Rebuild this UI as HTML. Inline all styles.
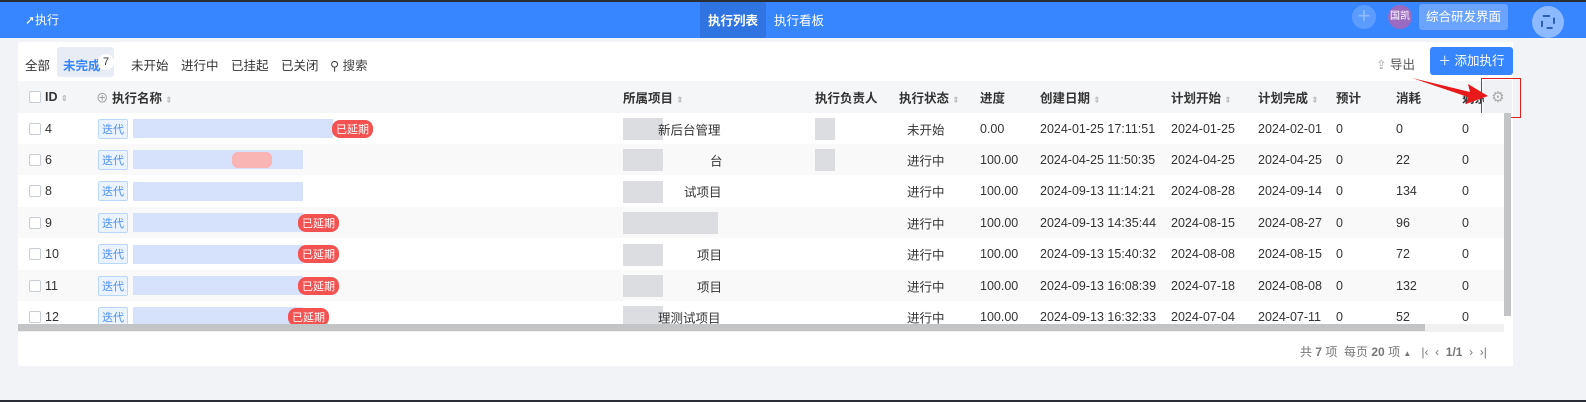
<!DOCTYPE html>
<html><head><meta charset="utf-8"><style>
*{box-sizing:border-box;margin:0;padding:0}
body{width:1586px;height:402px;overflow:hidden;background:#f2f3f6;font-family:"Liberation Sans","Noto Sans CJK SC",sans-serif;font-size:12.5px;color:#333;position:relative}
.abs{position:absolute}
.top{left:0;top:0;width:1586px;height:38px;background:#3785ff;border-top:2px solid #2a2d33}
.w{color:#fff}
.card{left:18px;top:42px;width:1495px;height:324px;background:#fff}
.row{position:absolute;left:18px;width:1486px;height:31px}
.cell{position:absolute;top:50%;transform:translateY(-50%);white-space:nowrap}
.cb{width:12px;height:12px;border:1px solid #c8ccd3;border-radius:2px;background:#fff}
.tag{border:1px solid #b9d7fb;background:#eaf3ff;color:#4a90f5;font-size:11px;padding:1px 3px;border-radius:2px}
.late{background:#f45151;color:#fff;font-size:11px;padding:1px 4px;border-radius:8px}
.blur{position:absolute;background:#d6e2fb}
.gblur{position:absolute;background:#dcdde0}
.h{font-weight:bold;color:#333}
.sort{color:#bbb;font-size:8px}
</style></head><body>
<div class="abs top"></div>
<div class="abs w" style="left:25px;top:11px;font-size:12px">➚执行</div>
<div class="abs" style="left:700px;top:2px;width:66px;height:36px;background:#2f74e0"></div>
<div class="abs w" style="left:708px;top:10px;font-weight:bold">执行列表</div>
<div class="abs w" style="left:774px;top:10px">执行看板</div>
<div class="abs" style="left:1352px;top:5px;width:24px;height:24px;border-radius:50%;background:#5d9cff;color:#8fbcff;text-align:center;font-size:22px;line-height:22px">+</div>
<div class="abs" style="left:1388px;top:5px;width:24px;height:24px;border-radius:50%;background:#9b6bc2;color:#fff;font-size:10px;text-align:center;line-height:24px">国凯</div>
<div class="abs" style="left:1419px;top:4px;width:89px;height:26px;border-radius:3px;background:#6ba4ff;color:#fff;text-align:center;line-height:26px">综合研发界面</div>
<div class="abs" style="left:1532px;top:6px;width:32px;height:32px;border-radius:50%;background:#8cb9ff"><div class="abs" style="left:9px;top:9px;width:14px;height:14px;border:2px dashed #2d5fb0;border-radius:3px"></div></div>
<div class="abs card"></div>
<div class="abs" style="left:25px;top:55px">全部</div>
<div class="abs" style="left:57px;top:47px;width:57px;height:30px;background:#e8edf5;border-radius:3px"></div>
<div class="abs" style="left:63px;top:55px;color:#3785ff;font-weight:bold">未完成</div>
<div class="abs" style="left:98px;top:54px;width:16px;height:16px;border-radius:50%;background:#fff;text-align:center;line-height:16px;font-size:11px">7</div>
<div class="abs" style="left:131px;top:55px">未开始</div>
<div class="abs" style="left:181px;top:55px">进行中</div>
<div class="abs" style="left:231px;top:55px">已挂起</div>
<div class="abs" style="left:281px;top:55px">已关闭</div>
<div class="abs" style="left:330px;top:55px;color:#444">⚲ 搜索</div>
<div class="abs" style="left:1376px;top:54px;color:#555"><span style="color:#aaa">⇪</span> 导出</div>
<div class="abs" style="left:1430px;top:47px;width:83px;height:28px;background:#3785ff;border-radius:3px;color:#fff;text-align:center;line-height:28px">＋ 添加执行</div>
<div class="row" style="top:81px;height:32px;background:#f5f6f8">
<div class="cell cb" style="left:11px"></div>
<div class="cell h" style="left:27px">ID <span class="sort">⇕</span></div>
<div class="cell h" style="left:78px"><span style="color:#999;font-weight:normal">⊕</span> 执行名称 <span class="sort">⇕</span></div>
<div class="cell h" style="left:605px">所属项目 <span class="sort">⇕</span></div>
<div class="cell h" style="left:797px">执行负责人</div>
<div class="cell h" style="left:881px">执行状态 <span class="sort">⇕</span></div>
<div class="cell h" style="left:962px">进度</div>
<div class="cell h" style="left:1022px">创建日期 <span class="sort">⇕</span></div>
<div class="cell h" style="left:1153px">计划开始 <span class="sort">⇕</span></div>
<div class="cell h" style="left:1240px">计划完成 <span class="sort">⇕</span></div>
<div class="cell h" style="left:1318px">预计</div>
<div class="cell h" style="left:1378px">消耗</div>
<div class="cell h" style="left:1444px">剩余</div>
</div>
<div class="abs" style="left:1484px;top:80px;width:28px;height:36px;background:#f0f1f4;color:#aaa;text-align:center;line-height:36px;font-size:15px">⚙</div>
<div class="abs" style="left:1481px;top:78px;width:40px;height:40px;border:1px solid #e02020"></div>
<svg class="abs" style="left:1410px;top:72px" width="80" height="34"><polygon points="2,6 60,20 58,12 78,24 56,32 58,25" fill="#e8191a"/></svg>

<div id="rows"></div>
<script>
var d=[["4","新后台管理","未开始","0.00","2024-01-25 17:11:51","2024-01-25","2024-02-01","0",1],
["6","台","进行中","100.00","2024-04-25 11:50:35","2024-04-25","2024-04-25","22",0],
["8","试项目","进行中","100.00","2024-09-13 11:14:21","2024-08-28","2024-09-14","134",0],
["9","","进行中","100.00","2024-09-13 14:35:44","2024-08-15","2024-08-27","96",1],
["10","项目","进行中","100.00","2024-09-13 15:40:32","2024-08-08","2024-08-15","72",1],
["11","项目","进行中","100.00","2024-09-13 16:08:39","2024-07-18","2024-08-08","132",1],
["12","理测试项目","进行中","100.00","2024-09-13 16:32:33","2024-07-04","2024-07-11","52",1]];
var h="";
d.forEach(function(r,i){var t=113+i*31.4;
h+='<div class="row" style="top:'+t+'px;background:'+(i%2?'#f9f9f9':'#fff')+'">'+
'<div class="cell cb" style="left:11px"></div><div class="cell" style="left:27px">'+r[0]+'</div>'+
'<div class="cell tag" style="left:80px">迭代</div>'+
'<div class="blur" style="left:115px;top:6px;width:'+(i==0?200:170)+'px;height:19px"></div>'+
(r[8]?'<div class="cell late" style="left:'+(i==0?314:i==6?270:280)+'px">已延期</div>':'<div class="cell" style="left:214px;width:40px;height:16px;background:#f9b4b4;border-radius:6px;'+(i==1?'':'display:none')+'"></div>')+
'<div class="gblur" style="left:605px;top:5px;width:'+(i==3?95:40)+'px;height:22px"></div>'+
'<div class="cell" style="left:'+(705-r[1].length*13)+'px">'+r[1]+'</div>'+
(i<2?'<div class="gblur" style="left:797px;top:5px;width:20px;height:22px"></div>':'')+
'<div class="cell" style="left:889px">'+r[2]+'</div><div class="cell" style="left:962px">'+r[3]+'</div>'+
'<div class="cell" style="left:1022px">'+r[4]+'</div><div class="cell" style="left:1153px">'+r[5]+'</div>'+
'<div class="cell" style="left:1240px">'+r[6]+'</div><div class="cell" style="left:1318px">0</div>'+
'<div class="cell" style="left:1378px">'+r[7]+'</div><div class="cell" style="left:1444px">0</div></div>';});
document.getElementById('rows').innerHTML=h;
</script>
<div class="abs" style="left:1504px;top:113px;width:7px;height:203px;background:#c3c4c6"></div>
<div class="abs" style="left:18px;top:324px;width:1486px;height:8px;background:#f0f0f0"></div>
<div class="abs" style="left:18px;top:324px;width:1407px;height:7px;background:#c3c4c6"></div>
<div class="abs" style="left:1300px;top:343px;color:#777;font-size:12px">共 <b>7</b> 项 &nbsp;每页 <b>20</b> 项 <span style="font-size:8px">▲</span> &nbsp;&nbsp;|‹ &nbsp;‹ &nbsp;<b>1/1</b> &nbsp;› &nbsp;›|</div>
<div class="abs" style="left:0;top:400px;width:1586px;height:2px;background:#2a2d33"></div>
</body></html>
